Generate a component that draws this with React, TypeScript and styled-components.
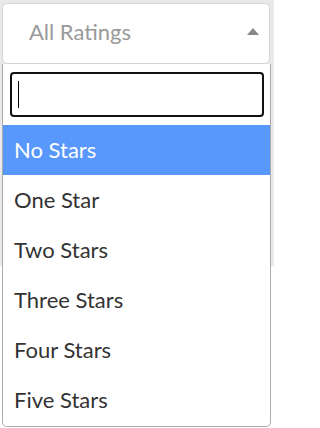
import React from 'react';
import styled, { createGlobalStyle } from 'styled-components';

const GlobalStyle = createGlobalStyle`
    html, body {
        margin: 0;
        padding: 0;
        background: #fff;
    }
    * {
        box-sizing: border-box;
    }
`;

const Page = styled.div`
    width: 274px;
    height: 428px;
    overflow: hidden;
    padding: 3px 4px 0 2px;
    background: linear-gradient(#e9e9ec 0, #e9e9ec 266px, #fff 266px);
    font-family: Lato, "Open Sans", sans-serif;
`;

const Select = styled.div`
    display: flex;
    flex-direction: column;
    width: 268px;
`;

const Selection = styled.div`
    height: 61px;
    display: flex;
    align-items: center;
    justify-content: space-between;
    padding: 0 10px 0 26px;
    background: #fff;
    border: 1px solid #d4d4d8;
    border-radius: 5px;
`;

const Placeholder = styled.span`
    font-size: 22px;
    color: #999;
    padding-bottom: 4px;
`;

const Arrow = styled.span`
    width: 0;
    height: 0;
    border-left: 6px solid transparent;
    border-right: 6px solid transparent;
    border-bottom: 7px solid #888;
    margin-bottom: 5px;
`;

const Dropdown = styled.div`
    background: #fff;
    border: 1px solid #aaa;
    border-top: none;
    border-radius: 0 0 5px 5px;
    width: 269px;
    padding-bottom: 1px;
`;

const SearchWrap = styled.div`
    padding: 8px 6px 8px 7px;
`;

const SearchBox = styled.div`
    height: 45px;
    border: 2px solid #111;
    border-radius: 4px;
    display: flex;
    align-items: center;
    padding-left: 6px;
`;

const Caret = styled.span`
    width: 1px;
    height: 27px;
    background: #000;
`;

const Options = styled.ul`
    list-style: none;
    margin: 0;
    padding: 0;
`;

const Option = styled.li<{ $active?: boolean }>`
    height: 50px;
    display: flex;
    align-items: center;
    padding: 0 0 2px 11px;
    font-size: 22px;
    color: ${(p) => (p.$active ? '#fff' : '#333')};
    background: ${(p) => (p.$active ? '#5897fb' : 'transparent')};
`;

const ratings = ['No Stars', 'One Star', 'Two Stars', 'Three Stars', 'Four Stars', 'Five Stars'];

export default function App() {
    return (
        <Page>
            <GlobalStyle />
            <Select>
                <Selection>
                    <Placeholder>All Ratings</Placeholder>
                    <Arrow />
                </Selection>
                <Dropdown>
                    <SearchWrap>
                        <SearchBox>
                            <Caret />
                        </SearchBox>
                    </SearchWrap>
                    <Options>
                        {ratings.map((r, i) => (
                            <Option key={r} $active={i === 0}>{r}</Option>
                        ))}
                    </Options>
                </Dropdown>
            </Select>
        </Page>
    );
}
